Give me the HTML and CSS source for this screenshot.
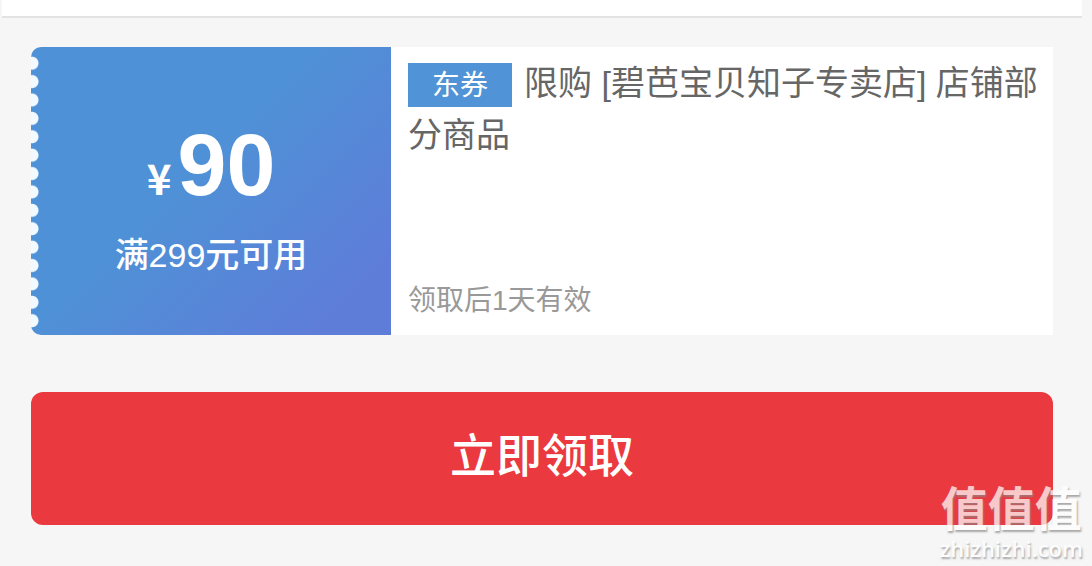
FILE: index.html
```
<!DOCTYPE html>
<html lang="zh-CN">
<head>
<meta charset="utf-8">
<meta name="viewport" content="width=device-width, initial-scale=1">
<title>领取优惠券</title>
<link rel="stylesheet" href="styles.css">
</head>
<body>
<header class="topbar"></header>
<main class="page">
  <article class="coupon">
    <div class="coupon-value">
      <p class="price"><span class="currency">¥</span><strong class="amount">90</strong></p>
      <p class="condition">满299元可用</p>
    </div>
    <div class="coupon-info">
      <h1 class="title"><span class="tag">东券</span>限购 [碧芭宝贝知子专卖店] 店铺部分商品</h1>
      <p class="validity">领取后1天有效</p>
    </div>
  </article>
  <button class="claim" type="button">立即领取</button>
</main>
<div class="watermark">
  <span class="watermark-name">值值值</span>
  <span class="watermark-site">zhizhizhi.com</span>
</div>
</body>
</html>
```
FILE: styles.css
```
* {
  box-sizing: border-box;
}

body {
  margin: 0;
  min-height: 100vh;
  position: relative;
  background: #f6f6f6;
  color: #666;
  font-family: "Liberation Sans", "Noto Sans CJK SC", sans-serif;
}

p,
h1 {
  margin: 0;
  font-weight: 400;
}

.topbar {
  height: 18px;
  margin: 0 10px 0 2px;
  background: #fff;
  border-bottom: 2px solid #e3e3e3;
}

.page {
  padding: 29px 39px 40px 31px;
}

.coupon {
  display: flex;
  min-height: 288px;
  background: #fff;
  border-radius: 10px 0 0 10px;
}

.coupon-value {
  position: relative;
  flex: 0 0 360px;
  padding-top: 72px;
  border-radius: 10px 0 0 10px;
  background: linear-gradient(135deg, #4f91d6 44%, #5e7dd9 88%);
  color: #fff;
  text-align: center;
}

/* Perforated edge */
.coupon-value::before {
  content: "";
  position: absolute;
  inset: 7px auto 5px 0;
  width: 8px;
  background: radial-gradient(circle at 1px 50%, #f3faff 6px, transparent 7px) 0 0 / 8px 18px;
  background-repeat: no-repeat round;
}

.price {
  height: 92px;
  line-height: 92px;
}

.currency {
  margin-right: 6px;
  font-family: "Noto Sans CJK SC", sans-serif;
  font-size: 42px;
  font-weight: 700;
}

.amount {
  font-size: 88px;
}

.condition {
  margin-top: 18px;
  font-size: 34px;
  font-weight: 500;
  line-height: 52px;
}

.coupon-info {
  flex: 1;
  display: flex;
  flex-direction: column;
  justify-content: space-between;
  padding: 10px 0 12px 17px;
}

.title {
  font-size: 34px;
  line-height: 52px;
}

.tag {
  display: inline-block;
  width: 104px;
  height: 44px;
  margin-right: 12px;
  background: #5093d6;
  color: #fff;
  font-size: 28px;
  line-height: 46px;
  text-align: center;
}

.validity {
  color: #999;
  font-size: 28px;
  line-height: 44px;
}

.claim {
  display: block;
  width: 100%;
  margin-top: 57px;
  padding: 30px 32px 34px;
  border: 0;
  border-radius: 12px;
  background: #ea393f;
  color: #fff;
  font-family: inherit;
  font-size: 46px;
  font-weight: 500;
  line-height: 69px;
}

.watermark {
  position: absolute;
  right: 9px;
  bottom: 4px;
  display: flex;
  flex-direction: column;
  align-items: center;
  color: #fff;
  opacity: 0.72;
  text-shadow: 1px 2px 2px #8a8a8a;
  pointer-events: none;
}

.watermark-name {
  font-size: 47px;
  font-weight: 700;
  line-height: 48px;
}

.watermark-site {
  font-family: "Open Sans", sans-serif;
  font-size: 22px;
  font-weight: 600;
  line-height: 28px;
}
```
